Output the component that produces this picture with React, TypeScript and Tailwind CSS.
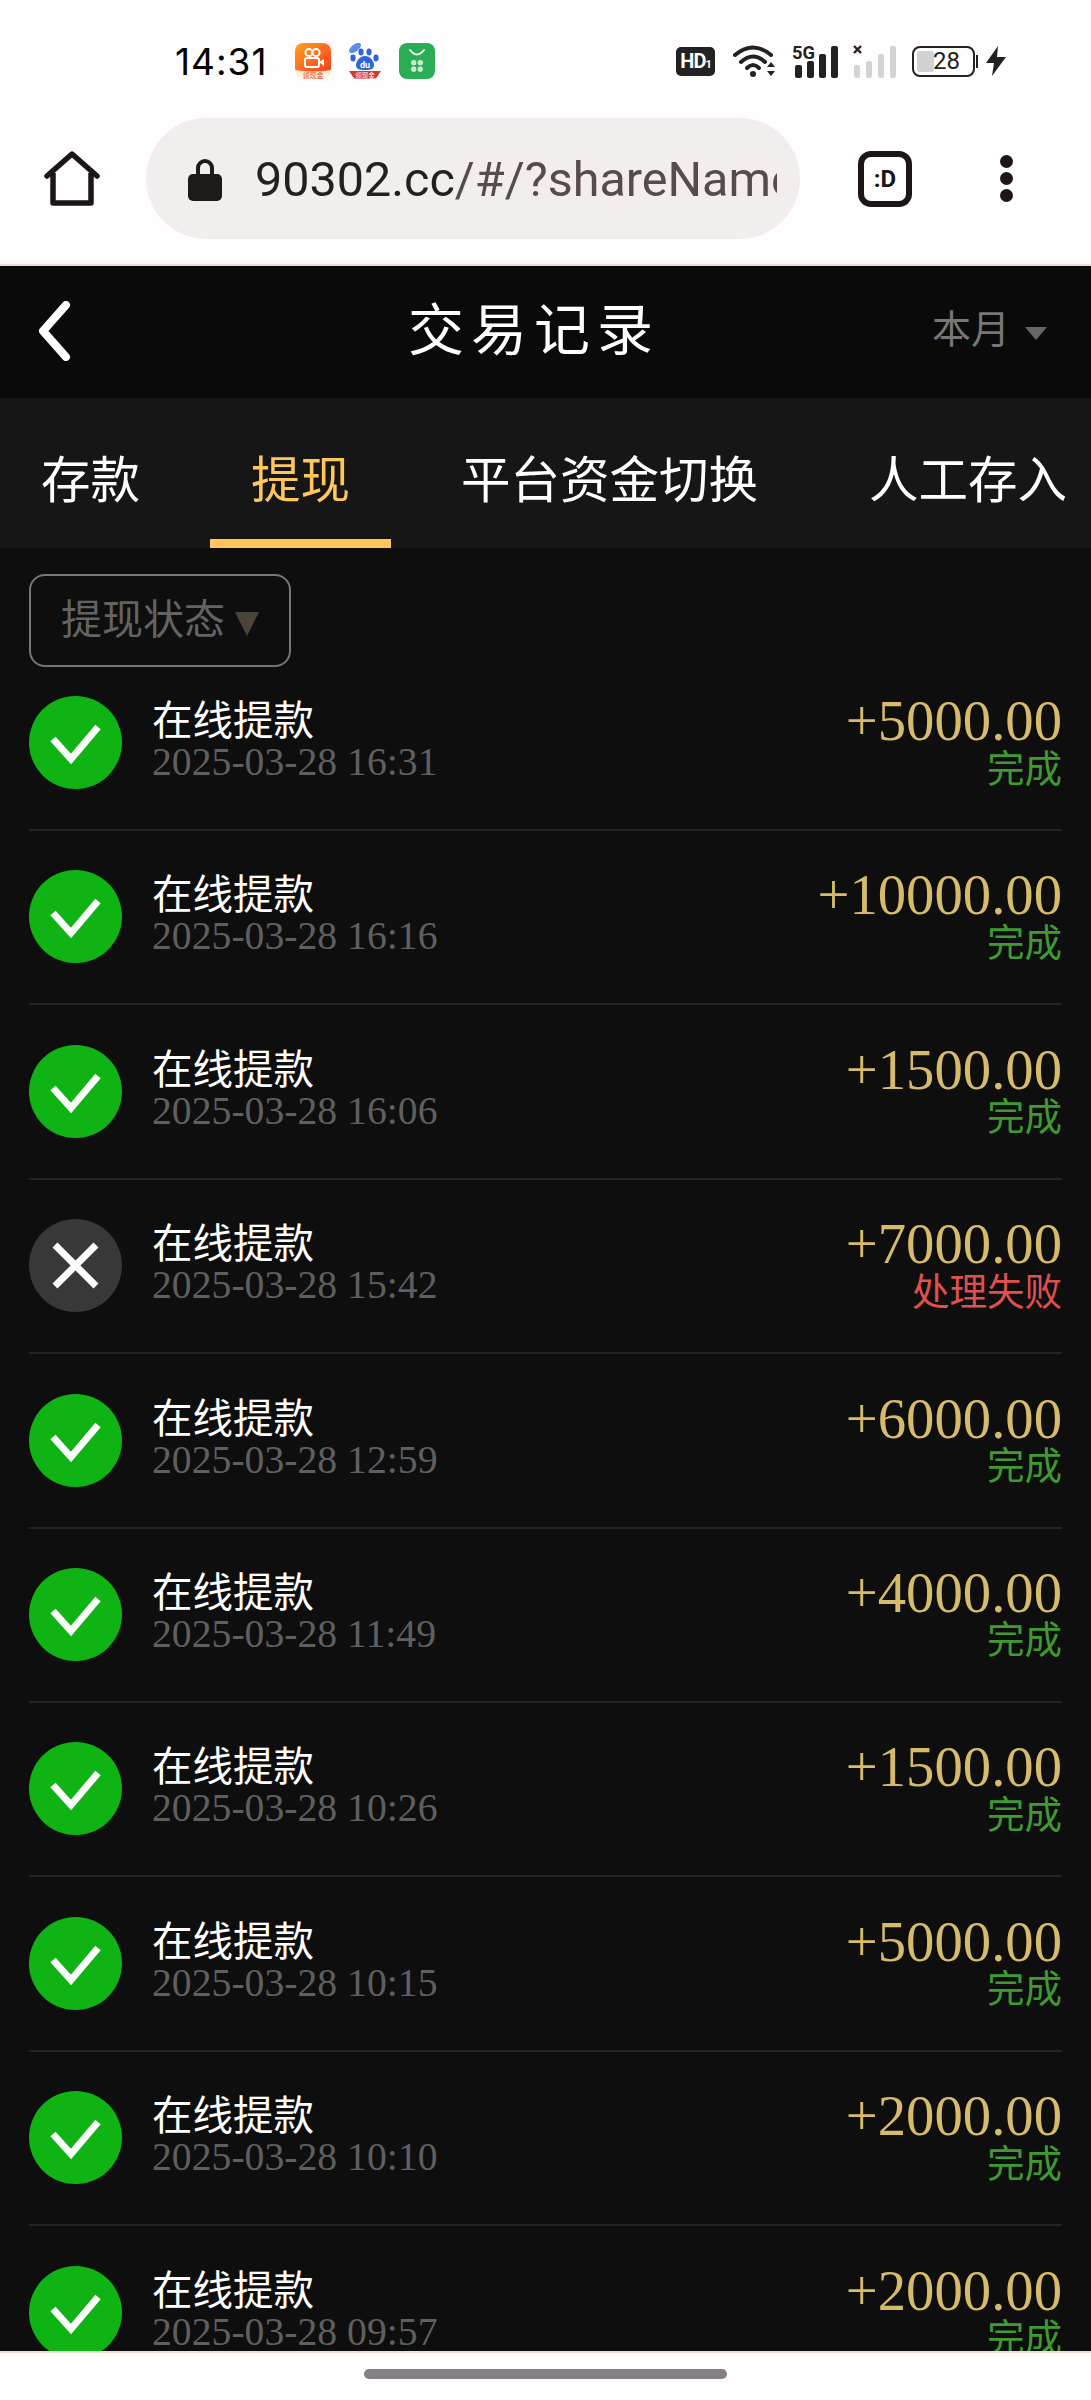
const cjk = "font-['Roboto','Noto_Sans_CJK_SC',sans-serif]"
const serif = "font-['Liberation_Serif','Noto_Sans_CJK_SC',serif]"

type Record = { amount: string; time: string; failed?: boolean }

const records: Record[] = [
  { amount: "+5000.00", time: "2025-03-28 16:31" },
  { amount: "+10000.00", time: "2025-03-28 16:16" },
  { amount: "+1500.00", time: "2025-03-28 16:06" },
  { amount: "+7000.00", time: "2025-03-28 15:42", failed: true },
  { amount: "+6000.00", time: "2025-03-28 12:59" },
  { amount: "+4000.00", time: "2025-03-28 11:49" },
  { amount: "+1500.00", time: "2025-03-28 10:26" },
  { amount: "+5000.00", time: "2025-03-28 10:15" },
  { amount: "+2000.00", time: "2025-03-28 10:10" },
  { amount: "+2000.00", time: "2025-03-28 09:57" },
]

function VideoAppIcon() {
  return (
    <svg width="36" height="36" viewBox="0 0 36 36" className="shrink-0">
      <defs>
        <linearGradient id="ks" x1="0" y1="0" x2="1" y2="1">
          <stop offset="0" stopColor="#ffa01e" />
          <stop offset="1" stopColor="#f8371f" />
        </linearGradient>
      </defs>
      <rect width="36" height="33" rx="8" fill="url(#ks)" />
      <circle cx="14" cy="9.5" r="3.6" fill="none" stroke="#fff" strokeWidth="2" />
      <circle cx="21" cy="9.5" r="3.6" fill="none" stroke="#fff" strokeWidth="2" />
      <rect x="10" y="15" width="14" height="9" rx="2" fill="none" stroke="#fff" strokeWidth="2" />
      <path d="M24 19l5-3v7z" fill="#fff" />
      <path d="M0 27q18 3 36 0v4q-4 5-8 5H8q-5 0-8-6z" fill="#fff1d8" />
      <text x="18" y="34.5" textAnchor="middle" fontSize="7" fill="#e63a1e" fontFamily="Noto Sans CJK SC">领现金</text>
    </svg>
  )
}

function PawAppIcon() {
  return (
    <svg width="36" height="36" viewBox="0 0 36 36" className="shrink-0">
      <ellipse cx="8" cy="5" rx="7" ry="3.5" transform="rotate(-38 8 5)" fill="#5b8ee6" />
      <ellipse cx="6" cy="15" rx="2.6" ry="3.4" fill="#2f62dd" />
      <ellipse cx="14" cy="9" rx="2.6" ry="3.4" fill="#2f62dd" />
      <ellipse cx="22" cy="9" rx="2.6" ry="3.4" fill="#2f62dd" />
      <ellipse cx="29" cy="15" rx="2.6" ry="3.4" fill="#2f62dd" />
      <path d="M18 13c5 0 9 5 9 9 0 4-3 5-9 5s-9-1-9-5c0-4 4-9 9-9z" fill="#2f62dd" />
      <text x="18" y="24.5" textAnchor="middle" fontSize="9" fontWeight="700" fill="#fff" fontFamily="Roboto">du</text>
      <path d="M2 28h32l-4 6q-1 2-4 2H10q-3 0-4-2z" fill="#d8392f" />
      <text x="18" y="34.5" textAnchor="middle" fontSize="6.5" fill="#fff" fontFamily="Noto Sans CJK SC">领现金</text>
    </svg>
  )
}

function MarketAppIcon() {
  return (
    <svg width="36" height="36" viewBox="0 0 36 36" className="shrink-0">
      <rect width="36" height="36" rx="8" fill="#2aae55" />
      <path d="M11 7q7 9 14 0" fill="none" stroke="#fff" strokeWidth="1.8" strokeLinecap="round" />
      <g fill="#c6ecd0">
        <rect x="12" y="17" width="5.4" height="5.4" rx="2.4" />
        <rect x="18.6" y="17" width="5.4" height="5.4" rx="2.4" />
        <rect x="12" y="23.6" width="5.4" height="5.4" rx="2.4" />
        <rect x="18.6" y="23.6" width="5.4" height="5.4" rx="2.4" />
      </g>
    </svg>
  )
}

function StatusIcons() {
  return (
    <div className="flex items-center">
      <div className="flex h-[29px] w-[39px] items-center justify-center rounded-[5px] bg-[#222] text-[20px] font-bold leading-none tracking-tighter text-white font-['Roboto',sans-serif]">
        HD<span className="mt-[6px] text-[11px]">1</span>
      </div>
      {/* wifi with up/down arrows */}
      <svg width="45" height="34" viewBox="0 0 45 34" className="ml-[18px]" fill="none" stroke="#222" strokeWidth="4">
        <path d="M2 11Q20 -4 38 11" strokeLinecap="round" />
        <path d="M8 18Q20 7 32 18" strokeLinecap="round" />
        <path d="M14 24Q20 18 26 24" strokeLinecap="round" />
        <circle cx="20" cy="30" r="3" fill="#222" stroke="none" />
        <path d="M34 23l4-5 4 5zM34 27l4 5 4-5z" fill="#222" stroke="none" />
      </svg>
      <svg width="46" height="34" viewBox="0 0 46 34" className="ml-[14px]">
        <text x="0" y="15" fontSize="19" fontWeight="700" fill="#222" fontFamily="Roboto" textLength="23" lengthAdjust="spacingAndGlyphs">5G</text>
        <rect x="3" y="21" width="7" height="13" rx="2" fill="#222" />
        <rect x="15" y="17" width="7" height="17" rx="2" fill="#222" />
        <rect x="27" y="10" width="7" height="24" rx="2" fill="#222" />
        <rect x="39" y="2" width="7" height="32" rx="2" fill="#222" />
      </svg>
      <svg width="44" height="34" viewBox="0 0 44 34" className="ml-[15px]">
        <path d="M1 2l7 7M8 2l-7 7" stroke="#222" strokeWidth="2.4" />
        <rect x="1" y="21" width="6" height="13" rx="2" fill="#d4d4d4" />
        <rect x="13" y="17" width="6" height="17" rx="2" fill="#d4d4d4" />
        <rect x="25" y="10" width="6" height="24" rx="2" fill="#d4d4d4" />
        <rect x="37" y="2" width="6" height="32" rx="2" fill="#d4d4d4" />
      </svg>
      <div className="ml-[15px] flex items-center">
        <div className="relative flex h-[31px] w-[63px] items-center justify-center overflow-hidden rounded-[8px] border-2 border-[#222]">
          <div className="absolute inset-y-[3px] left-[3px] w-[17px] rounded-[3px] bg-[#d2d2d2]" />
          <span className="relative ml-[6px] text-[24px] leading-none text-[#222] font-['Roboto',sans-serif]">28</span>
        </div>
        <div className="ml-[1px] h-[13px] w-[2px] bg-[#222]" />
      </div>
      <svg width="20" height="30" viewBox="0 0 20 30" className="ml-[8px]">
        <path d="M12 0L0 17h8l-2 13L20 11h-9z" fill="#222" />
      </svg>
    </div>
  )
}

function BrowserBar() {
  return (
    <div className="flex h-[121px] items-center">
      <svg width="58" height="56" viewBox="0 0 58 56" className="ml-[44px]" fill="none" stroke="#1b1716" strokeWidth="5.5" strokeLinejoin="round">
        <path d="M3 25L28 3l25 22" strokeLinecap="round" />
        <path d="M9 22v30h38V22" />
      </svg>
      <div className="ml-[44px] flex h-[121px] w-[654px] items-center rounded-full bg-[#f3eeee]">
        <svg width="36" height="44" viewBox="0 0 36 44" className="ml-[41px] shrink-0">
          <path d="M11 18v-7a7 7 0 0 1 14 0v7" fill="none" stroke="#1f1a1a" strokeWidth="4" />
          <rect x="1" y="17" width="34" height="27" rx="5" fill="#1f1a1a" />
        </svg>
        <div className="ml-[32px] mt-[4px] w-[522px] overflow-hidden whitespace-nowrap text-[48.5px] leading-none text-[#574c4c] font-['Roboto',sans-serif]">
          <span className="text-[#261f1f]">90302.cc</span>/#/?shareName=
        </div>
      </div>
      <div className="ml-[58px] flex h-[56px] w-[54px] items-center justify-center rounded-[13px] border-[6px] border-[#1b1716] text-[24px] font-bold leading-none text-[#1b1716] font-['Roboto',sans-serif]">
        :D
      </div>
      <div className="ml-[88px] flex flex-col gap-[4px]">
        <div className="size-[13px] rounded-full bg-[#1b1716]" />
        <div className="size-[13px] rounded-full bg-[#1b1716]" />
        <div className="size-[13px] rounded-full bg-[#1b1716]" />
      </div>
    </div>
  )
}

function RecordIcon({ failed }: { failed?: boolean }) {
  return (
    <svg width="93" height="93" viewBox="0 0 93 93" className="shrink-0">
      <circle cx="46.5" cy="46.5" r="46.5" fill={failed ? "#383838" : "#0fb314"} />
      {failed ? (
        <path d="M26 26l41 41M67 26L26 67" fill="none" stroke="#fff" strokeWidth="7" />
      ) : (
        <path d="M24 43l18 20 27-32" fill="none" stroke="#fff" strokeWidth="7" />
      )}
    </svg>
  )
}

function RecordRow({ record }: { record: Record }) {
  return (
    <div className="flex border-b-2 border-[#232323] pb-[40px] pt-[39.4px] first:pt-[29px]">
      <RecordIcon failed={record.failed} />
      <div className="ml-[30px] flex-1">
        <div className={`mt-[5px] text-[40.5px] leading-[40px] text-white ${cjk}`}>在线提款</div>
        <div className={`mt-[1px] text-[39.7px] leading-[40px] text-[#5f5f5f] ${serif}`}>{record.time}</div>
      </div>
      <div className="flex flex-col items-end">
        <div className={`mt-[2px] text-[56.7px] leading-[46px] text-[#d6bc6a] ${serif}`}>{record.amount}</div>
        <div className={`mt-[5.5px] text-[37.5px] leading-[38px] ${cjk} ${record.failed ? "text-[#e0504f]" : "text-[#3f9a2f]"}`}>
          {record.failed ? "处理失败" : "完成"}
        </div>
      </div>
    </div>
  )
}

export default function App() {
  return (
    <div className={`flex h-[2400px] w-[1091px] flex-col overflow-hidden bg-[#fffdfe] ${cjk}`}>
      <div className="h-[264px] shrink-0">
        <div className="flex h-[118px] items-center pt-[4px]">
          <div className="ml-[175px] w-[120px] text-[37px] leading-none tracking-[1px] text-black font-['Inter',sans-serif]">14:31</div>
          <div className="flex items-center gap-[16px]">
            <VideoAppIcon />
            <PawAppIcon />
            <MarketAppIcon />
          </div>
          <div className="ml-[241px]">
            <StatusIcons />
          </div>
        </div>
        <BrowserBar />
      </div>
      <div className="h-[2px] shrink-0 bg-[#f4dcd6]" />

      <div className="flex h-[132px] shrink-0 items-center bg-[#0a0a0a]">
        <svg width="38" height="60" viewBox="0 0 38 60" className="ml-[35px] mb-[2px]" fill="none" stroke="#fff" strokeWidth="8" strokeLinecap="round" strokeLinejoin="round">
          <path d="M31 4L8 30l23 26" />
        </svg>
        <div className="mb-[2px] ml-[335px] w-[260px] text-[56px] leading-none tracking-[7px] text-white">交易记录</div>
        <div className="flex w-[0] flex-1 items-center justify-end pr-[44px]">
          <span className="mb-[4px] text-[39px] leading-none text-[#777]">本月</span>
          <div className="ml-[15px] mt-[2px] h-0 w-0 border-x-[11px] border-t-[13px] border-x-transparent border-t-[#666]" />
        </div>
      </div>

      <div className="flex h-[150px] shrink-0 gap-[29px] overflow-hidden bg-[#161616] text-[49.5px] leading-none">
        {["存款", "提现", "平台资金切换", "人工存入"].map((tab) => (
          <div
            key={tab}
            className={`flex shrink-0 items-center border-b-[9px] px-[41px] pt-[26px] ${tab === "提现" ? "border-[#ffc65c] text-[#ffc65c]" : "border-transparent text-white"}`}
          >
            {tab}
          </div>
        ))}
      </div>

      <div className="min-h-0 flex-1 overflow-hidden bg-[#0e0e0f] px-[29px]">
        <div className="pt-[26px]">
          <div className="flex h-[93px] w-[262px] items-center rounded-[16px] border-2 border-[#777] pl-[30px]">
            <span className="text-[41px] leading-none text-[#636363]">提现状态</span>
            <div className="ml-[10px] mt-[6px] h-0 w-0 border-x-[12px] border-t-[24px] border-x-transparent border-t-[#4b4537]" />
          </div>
        </div>
        <div>
          {records.map((record) => (
            <RecordRow key={record.time} record={record} />
          ))}
        </div>
      </div>

      <div className="h-[2px] shrink-0 bg-[#f4dcd6]" />
      <div className="flex h-[47px] shrink-0 justify-center pt-[16px]">
        <div className="h-[10px] w-[363px] rounded-full bg-[#848085]" />
      </div>
    </div>
  )
}
